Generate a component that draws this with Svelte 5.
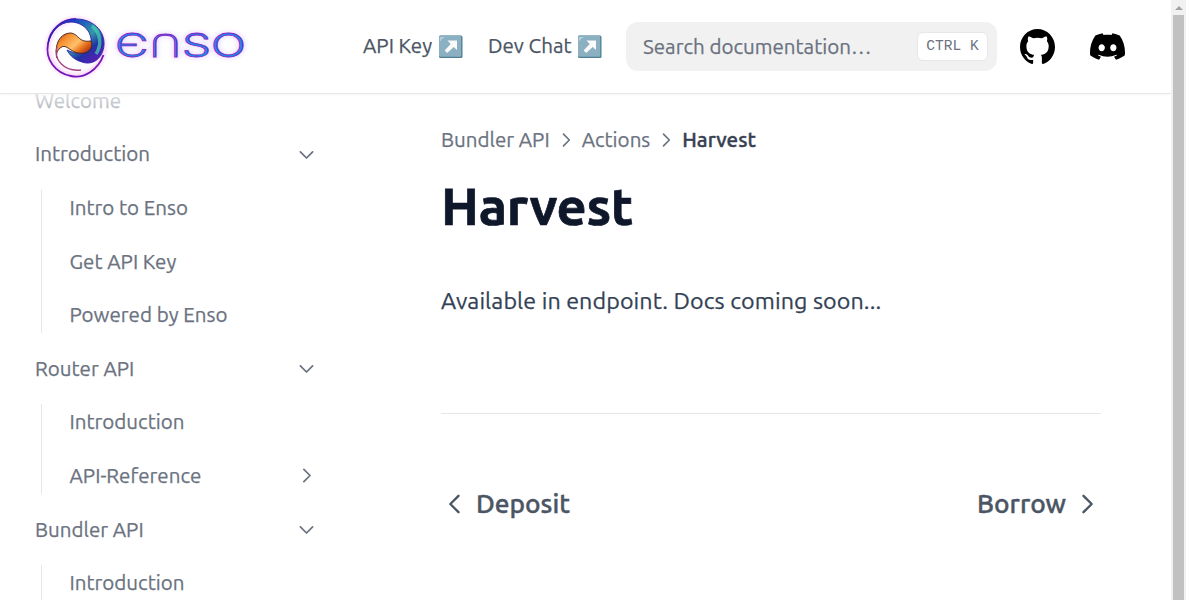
<script>
  const github = 'M12 3C7.0275 3 3 7.12937 3 12.2276C3 16.3109 5.57625 19.7597 9.15374 20.9824C9.60374 21.0631 9.77249 20.7863 9.77249 20.5441C9.77249 20.3249 9.76125 19.5982 9.76125 18.8254C7.5 19.2522 6.915 18.2602 6.735 17.7412C6.63375 17.4759 6.19499 16.6569 5.8125 16.4378C5.4975 16.2647 5.0475 15.838 5.80124 15.8264C6.51 15.8149 7.01625 16.4954 7.18499 16.7723C7.99499 18.1679 9.28875 17.7758 9.80625 17.5335C9.885 16.9337 10.1212 16.53 10.38 16.2993C8.3775 16.0687 6.285 15.2728 6.285 11.7432C6.285 10.7397 6.63375 9.9092 7.20749 9.26326C7.1175 9.03257 6.8025 8.08674 7.2975 6.81794C7.2975 6.81794 8.05125 6.57571 9.77249 7.76377C10.4925 7.55615 11.2575 7.45234 12.0225 7.45234C12.7875 7.45234 13.5525 7.55615 14.2725 7.76377C15.9937 6.56418 16.7475 6.81794 16.7475 6.81794C17.2424 8.08674 16.9275 9.03257 16.8375 9.26326C17.4113 9.9092 17.76 10.7281 17.76 11.7432C17.76 15.2843 15.6563 16.0687 13.6537 16.2993C13.98 16.5877 14.2613 17.1414 14.2613 18.0065C14.2613 19.2407 14.25 20.2326 14.25 20.5441C14.25 20.7863 14.4188 21.0746 14.8688 20.9824C16.6554 20.364 18.2079 19.1866 19.3078 17.6162C20.4077 16.0457 20.9995 14.1611 21 12.2276C21 7.12937 16.9725 3 12 3Z';
  const discord = 'M26.0015 6.9529C24.0021 6.03845 21.8787 5.37198 19.6623 5C19.3833 5.48048 19.0733 6.13144 18.8563 6.64292C16.4989 6.30193 14.1585 6.30193 11.8336 6.64292C11.6166 6.13144 11.2911 5.48048 11.0276 5C8.79575 5.37198 6.67235 6.03845 4.6869 6.9529C0.672601 12.8736 -0.41235 18.6548 0.130124 24.3585C2.79599 26.2959 5.36889 27.4739 7.89682 28.2489C8.51679 27.4119 9.07477 26.5129 9.55525 25.5675C8.64079 25.2265 7.77283 24.808 6.93587 24.312C7.15286 24.1571 7.36986 23.9866 7.57135 23.8161C12.6241 26.1255 18.0969 26.1255 23.0876 23.8161C23.3046 23.9866 23.5061 24.1571 23.7231 24.312C22.8861 24.808 22.0182 25.2265 21.1037 25.5675C21.5842 26.5129 22.1422 27.4119 22.7621 28.2489C25.2885 27.4739 27.8769 26.2959 30.5288 24.3585C31.1952 17.7559 29.4733 12.0212 26.0015 6.9529ZM10.2527 20.8402C8.73376 20.8402 7.49382 19.4608 7.49382 17.7714C7.49382 16.082 8.70276 14.7025 10.2527 14.7025C11.7871 14.7025 13.0425 16.082 13.0115 17.7714C13.0115 19.4608 11.7871 20.8402 10.2527 20.8402ZM20.4373 20.8402C18.9183 20.8402 17.6768 19.4608 17.6768 17.7714C17.6768 16.082 18.8873 14.7025 20.4373 14.7025C21.9717 14.7025 23.2271 16.082 23.1961 17.7714C23.1961 19.4608 21.9872 20.8402 20.4373 20.8402Z';

  const menu = [
    { label: 'Welcome' },
    {
      label: 'Introduction',
      children: [{ label: 'Intro to Enso' }, { label: 'Get API Key' }, { label: 'Powered by Enso' }]
    },
    {
      label: 'Router API',
      children: [{ label: 'Introduction' }, { label: 'API-Reference', folder: true }]
    },
    {
      label: 'Bundler API',
      children: [{ label: 'Introduction' }]
    }
  ];
</script>

{#snippet chevron(kind, size)}
  <svg class="chevron {kind}" width={size} height={size} viewBox="0 0 24 24" fill="none" stroke="currentColor">
    <path d="M9 5l7 7-7 7" stroke-linecap="round" stroke-linejoin="round" />
  </svg>
{/snippet}

{#snippet arrowBadge()}
  <svg class="badge" width="25" height="24" viewBox="0 0 25 24">
    <rect x="1" y=".5" width="23.5" height="22.5" rx="1.5" fill="#4c8092" />
    <rect x="1" y=".5" width="22.2" height="21.2" rx="1.2" fill="#8bb0c2" />
    <path d="M2 6.5V3.5Q2 2 3.5 2H7Q3.5 3 2 6.5Z" fill="#b7d3df" />
    <path d="M9.5 5.5H19V15L15.7 12L9.2 18L6.6 15.4L12.7 9Z" fill="#fafafa" />
  </svg>
{/snippet}

<div class="page">
  <header>
    <a class="logo" href="#home" aria-label="Enso">
      <svg width="214" height="74" viewBox="0 0 214 74">
        <defs>
          <linearGradient id="ring" x1="0" y1="0" x2="1" y2="1">
            <stop offset="0" stop-color="#6420bd" /><stop offset=".25" stop-color="#1644c4" />
            <stop offset=".55" stop-color="#3298a8" /><stop offset=".72" stop-color="#2232a5" /><stop offset="1" stop-color="#7912bd" />
          </linearGradient>
          <linearGradient id="flame" x1="0" y1="0" x2="1" y2=".8">
            <stop offset="0" stop-color="#8a2d10" /><stop offset=".25" stop-color="#f58a2c" />
            <stop offset=".55" stop-color="#ffc16a" /><stop offset=".75" stop-color="#e66a15" /><stop offset="1" stop-color="#7d1a28" />
          </linearGradient>
          <filter id="halo" x="-20%" y="-20%" width="140%" height="140%"><feGaussianBlur stdDeviation="2" /></filter>
        </defs>
        <circle cx="41" cy="37.5" r="28" fill="none" stroke="#ed91e5" stroke-width="3" opacity=".6" filter="url(#halo)" />
        <path d="M68.5 45C63 60 49 69 36 66C20 63 10 49 13 34C15 19 27 9 41 9" fill="none" stroke="#7416bc" stroke-width="1.8" />
        <path d="M13 34C15 19 27 9 41 9C58 9 70 21 69 35C68 48 58 56 47 52C40 50 35 46 32 40C40 44 50 45 54 39C61 26 50 12 36 12C24 12 16 22 13 34Z" fill="url(#ring)" stroke="#2b20ae" stroke-width=".9" />
        <path d="M57 16C66 23 67 35 61 44" fill="none" stroke="#45d1b2" stroke-width="3.5" opacity=".7" />
        <path d="M22 48C19 34 25 23 36 23C44 24 43 33 56 31C59 38 53 45 43 43C34 41 31 33 25 38C22 41 21 44 22 48Z" fill="url(#flame)" stroke="#472019" stroke-width=".9" />
        <path d="M22 37C18 49 29 62 46 60" fill="none" stroke="#a34286" stroke-width="1.4" />
        <text class="halo" x="80" y="46.5" textLength="131" lengthAdjust="spacingAndGlyphs" filter="url(#halo)">Є<tspan class="arch">Ո</tspan>SO</text>
        <text class="word" x="80" y="46.5" textLength="131" lengthAdjust="spacingAndGlyphs">Є<tspan class="arch">Ո</tspan>SO</text>
      </svg>
    </a>
    <a class="nav" href="#key"><span>API Key</span>{@render arrowBadge()}</a>
    <a class="nav" href="#chat"><span>Dev Chat</span>{@render arrowBadge()}</a>
    <div class="search">
      <span>Search documentation…</span>
      <kbd>CTRL K</kbd>
    </div>
    <a class="social" href="#github" aria-label="GitHub"><svg width="35" height="35" viewBox="3 3 18 18"><path d={github} /></svg></a>
    <a class="social" href="#discord" aria-label="Discord"><svg width="35" height="27" viewBox="0 5 30.67 23.25"><path fill-rule="evenodd" d={discord} /></svg></a>
  </header>

  <div class="body">
    <aside>
      <ul class="menu">
        {#each menu as item}
          <li>
            <div class="row"><span>{item.label}</span>{#if item.children}{@render chevron('down', 21)}{/if}</div>
            {#if item.children}
              <ul class="sub">
                {#each item.children as child}
                  <li class="row"><span>{child.label}</span>{#if child.folder}{@render chevron('right', 21)}{/if}</li>
                {/each}
              </ul>
            {/if}
          </li>
        {/each}
      </ul>
    </aside>
    <main>
      <nav class="crumbs">
        <span>Bundler API</span>{@render chevron('crumb', 20)}
        <span>Actions</span>{@render chevron('crumb', 20)}
        <b>Harvest</b>
      </nav>
      <h1>Harvest</h1>
      <p>Available in endpoint. Docs coming soon...</p>
      <nav class="pager">
        <a href="#deposit">{@render chevron('left', 28)}<span>Deposit</span></a>
        <a href="#borrow"><span>Borrow</span>{@render chevron('next', 28)}</a>
      </nav>
    </main>
  </div>
  <div class="fade"></div>
  <div class="scrollbar"><i class="up"></i><div class="thumb"></div></div>
</div>

<style>
  :global(body) { overflow: hidden; }
  .page { position: relative; width: 1186px; height: 600px; overflow: hidden; background: #fff; color: #6b7280; font: 20.55px/28px Ubuntu, "Noto Sans", sans-serif; -webkit-text-stroke: .25px currentColor; }
  .page * { box-sizing: border-box; }
  a { color: inherit; text-decoration: none; }
  span, b { white-space: nowrap; }
  svg { display: block; flex: none; }
  header { position: relative; z-index: 3; width: 1171px; height: 93px; padding-left: 35px; display: flex; align-items: center; background: #fff; box-shadow: 0 1px 0 #e6e6e6, 0 2px 4px rgba(0, 0, 0, .03); }
  .logo { margin-right: 114px; }
  .logo text { font-family: Inter, "Noto Sans", sans-serif; font-size: 32px; font-weight: 300; -webkit-text-stroke: 0; }
  .logo .arch { font-family: "DejaVu Sans", sans-serif; font-weight: 200; }
  .logo .halo { fill: none; stroke: #c79bf0; stroke-width: 4px; opacity: .3; }
  .logo .word { fill: #168be4; stroke: #8424cc; stroke-width: .8px; }
  .nav { display: flex; align-items: center; justify-content: space-between; width: 100px; margin-right: 25px; color: #4b5563; }
  .nav span { padding-bottom: 2px; }
  .nav + .nav { width: 114px; margin-right: 24px; }
  .search { width: 371px; height: 49px; margin-right: 23px; padding: 0 9px 0 17px; border-radius: 12px; display: flex; align-items: center; justify-content: space-between; background: #f1f1f1; }
  kbd { width: 71px; height: 29px; border: 1px solid #e5e7eb; border-radius: 6px; background: #fff; font: 14.545px/26px "Liberation Mono", monospace; text-align: center; white-space: pre; -webkit-text-stroke: 0; }
  .social { margin-right: 35px; }
  .social path { fill: #000; }
  .body { display: flex; }
  aside { width: 326px; margin-top: -15.2px; padding: 0 9.5px 0 35px; }
  ul { list-style: none; margin: 0; padding: 0; }
  .row { height: 53.6px; padding-bottom: 7.6px; display: flex; align-items: center; justify-content: space-between; }
  .sub { position: relative; padding-left: 34.5px; }
  .sub::before { content: ""; position: absolute; left: 6px; top: 5px; bottom: 12.6px; width: 1px; background: #e5e7eb; }
  .chevron { stroke-width: 2; }
  .down { transform: rotate(90deg); }
  .left { transform: rotate(180deg); }
  main { width: 660px; margin-left: 115px; padding-top: 33px; }
  .crumbs { display: flex; align-items: center; gap: 6px; height: 28px; }
  .crumbs b { font-weight: 500; color: #374151; -webkit-text-stroke: .4px currentColor; }
  h1 { height: 58px; margin: 23px 0 0; color: #0f172a; font-size: 52.36px; line-height: 58px; font-weight: 700; letter-spacing: -.006em; -webkit-text-stroke: .7px currentColor; }
  p { height: 41px; margin: 45px 0 0; color: #334155; font-size: 23.27px; line-height: 41px; letter-spacing: .09px; }
  .pager { margin-top: 92px; padding-top: 72px; display: flex; justify-content: space-between; border-top: 1px solid #e5e7eb; color: #4b5563; font-size: 26.25px; line-height: 36px; font-weight: 500; -webkit-text-stroke: .4px currentColor; }
  .pager a { display: flex; align-items: center; gap: 7px; }
  .fade { position: absolute; z-index: 2; left: 0; top: 93px; width: 326px; height: 24px; background: linear-gradient(rgba(255, 255, 255, .8), rgba(255, 255, 255, .35)); }
  .scrollbar { position: absolute; z-index: 4; right: 0; top: 0; width: 15px; height: 600px; padding: 0 2px; display: flex; flex-direction: column; align-items: center; background: #f1f1f1; }
  .up { margin: 6px 0 5px; border: 4px solid transparent; border-top: 0; border-bottom: 4px solid #a3a3a3; }
  .thumb { flex: 1; width: 11px; background: #c1c1c1; }
</style>
